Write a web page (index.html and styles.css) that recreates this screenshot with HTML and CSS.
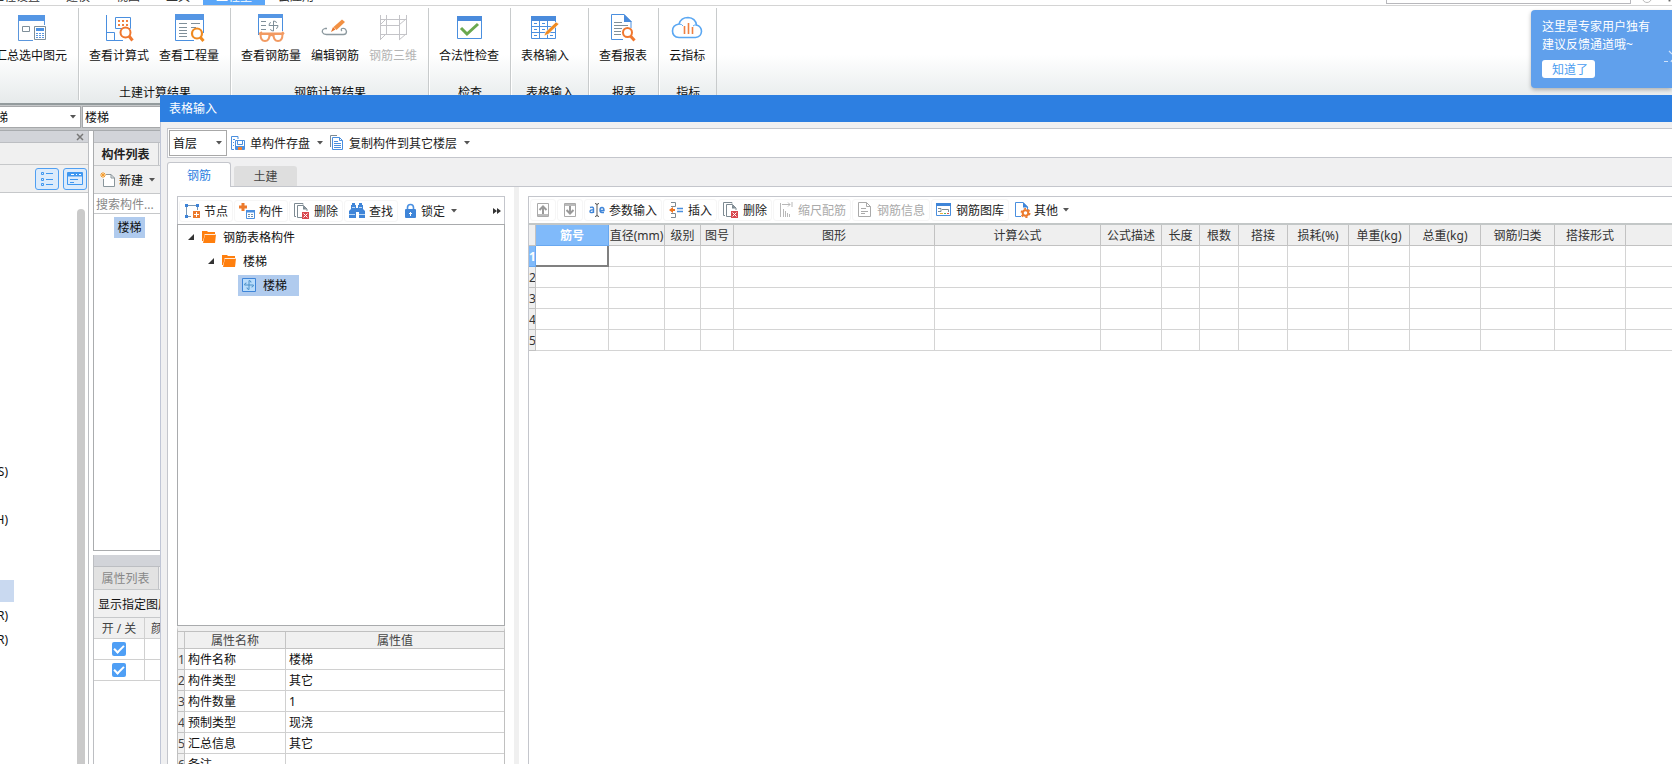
FILE: index.html
```html
<!DOCTYPE html>
<html lang="zh-CN">
<head>
<meta charset="utf-8">
<title>表格输入</title>
<link rel="stylesheet" href="styles.css">
</head>
<body>
<svg class="defs" aria-hidden="true">
  <symbol id="caret" viewBox="0 0 6 4"><path d="M0 0h6L3 3.5z" fill="#555"/></symbol>
  <symbol id="del" viewBox="0 0 16 16"><path d="M9 1.500V.5H.5v13H2" fill="none" stroke="#7d8a92"/><path d="M8 14.500H3.500V2.500H9.500l3.500 3.500V8" fill="none" stroke="#7d8a92"/><path d="M9 2.500v4h4z" fill="#7d8a92"/><path d="M8 9h7v7H8z" fill="#d9484e"/><path d="M9.500 10.500l4 4m0-4l-4 4" stroke="#fff"/></symbol>
  <symbol id="folder" viewBox="0 0 14 12"><path d="M0 0h5l1 1h7v2H3L1 10H0z" fill="#ff7f0e"/><path d="M3 3.500h11L13 12H1z" fill="#ff7f0e"/><path d="M2.500 3.500h11" stroke="#fff" stroke-width=".7"/></symbol>
  <symbol id="open" viewBox="0 0 6 6"><path d="M6 0v6H0z" fill="#333"/></symbol>
</svg>

<nav class="menu">
  <a href="#">工程设置</a><a href="#">建模</a><a href="#">视图</a><a href="#">工具</a><a href="#" class="current">工程量</a><a href="#">云应用</a>
  <input class="menu-search" type="text" placeholder="请输入功能名称或描述" aria-label="搜索功能">
  <span class="menu-dot"></span><span class="menu-dot dark"></span>
</nav>

<section class="ribbon">
  <div class="group first">
    <div class="tools">
      <button><svg viewBox="0 0 28 28"><path d="M1 1h27v6H1z" fill="#5596e4"/><path d="M1.500 7v19.500H16M27.500 7v4" fill="none" stroke="#5b96dc"/><path d="M5.500 17.500h7v-5h-7z" fill="#fff" stroke="#7f8f99"/><path d="M17.500 12.500h11v13h-11z" fill="#fff" stroke="#7f8f99"/><path d="M19 14h8v3h-8z" fill="#4a90e2"/><path d="M19 19.500h8M19 21.500h8M19 23.500h8" stroke="#5b96dc" stroke-dasharray="2 1"/></svg><span>汇总选中图元</span></button>
    </div>
    <h2></h2>
  </div>
  <div class="group">
    <div class="tools">
      <button><svg viewBox="0 0 28 28"><path d="M1.500 1v25.500H18M1.500 18.500h8v8" fill="none" stroke="#4a8fdf"/><path d="M10.500 3.500h15v11h-15z" fill="#fff" stroke="#4a8fdf"/><path d="M13 7h10M13 11h10" stroke="#f08040" stroke-width="2" stroke-dasharray="2 2"/><circle cx="20.500" cy="18.500" r="5" fill="#fff" stroke="#f07830" stroke-width="2"/><path d="M24 22l3.500 4.500" stroke="#f07830" stroke-width="3"/></svg><span>查看计算式</span></button>
      <button><svg viewBox="0 0 28 28"><path d="M0 0h29v6H0z" fill="#5596e4"/><path d="M.5 6v20.500H19M28.500 6v13" fill="none" stroke="#4a8fdf"/><path d="M4 9.500h8M16 9.500h9M4 13.500h8M16 13.500h5M4 16.500h8M4 19.500h8M4 22.500h8" stroke="#7f8f99"/><circle cx="22" cy="19.500" r="5" fill="#fff" stroke="#ef8a20" stroke-width="2.200"/><path d="M25.500 23.500l3 3.500" stroke="#ef8a20" stroke-width="3"/></svg><span>查看工程量</span></button>
    </div>
    <h2>土建计算结果</h2>
  </div>
  <div class="group">
    <div class="tools">
      <button><svg viewBox="0 0 28 28"><path d="M1 0h25v4H1z" fill="#5596e4"/><path d="M1.500 4v17M25.500 4v13" stroke="#4a8fdf"/><path d="M4 7.500h5M4 11.500h5M4 15.500h5M12 11.500h9M16.500 7v10M12 11.500q0-3 2-3M21 11.500q0 3-2 3M16.500 7q3 0 3 2M16.500 17q-3 0-3-2" fill="none" stroke="#7f8f99"/><path d="M2 20l3-2M27 20l-2-2M2 19.500h25M12.500 22q2-2 4 0" fill="none" stroke="#f29a62" stroke-width="2"/><path d="M3.500 20q0 7 4.500 7t4.500-7zM16.500 20q0 7 4.500 7t4.500-7z" fill="#fff" stroke="#f29a62" stroke-width="2"/></svg><span>查看钢筋量</span></button>
      <button><svg viewBox="0 0 28 28"><path d="M6 14.500H4q-3.500 1-2.500 4 1 2 4 2h17q3 0 3-3-1-4-4.500-3-1.500 1 0 2.500" fill="none" stroke="#8c999f" stroke-width="1.300"/><path d="M10 18l2-5 2.500 2.500z" fill="#e8762c"/><path d="M12.500 13L21 5.500l3 2.500-8.500 8z" fill="#f29042"/></svg><span>编辑钢筋</span></button>
      <button disabled><svg viewBox="0 0 28 28"><path d="M1.500 1v25M7.500 1v20M20.500 1v25M27.500 1v20M1 5.500h26M1 20.500h26M1 11.500h20M1 26l6-6M20 26l7-6M1 11l6-6M20 11l7-6" fill="none" stroke="#c4c4c8"/></svg><span>钢筋三维</span></button>
    </div>
    <h2>钢筋计算结果</h2>
  </div>
  <div class="group">
    <div class="tools">
      <button><svg viewBox="0 0 28 28"><path d="M2 2h25v5H2z" fill="#4a8bdc"/><path d="M2.500 7v17.500h24V7" fill="#fff" stroke="#4a8fdf"/><path d="M6 14l6 6L23 10" fill="none" stroke="#6aa84f" stroke-width="3"/></svg><span>合法性检查</span></button>
    </div>
    <h2>检查</h2>
  </div>
  <div class="group wide">
    <div class="tools">
      <button><svg viewBox="0 0 28 28"><path d="M0 2h25v5H0z" fill="#4a8bdc"/><path d="M.5 7v17.500h24V7M8.500 7v17M16.500 7v17M0 12.500h25M0 18.500h25" fill="none" stroke="#4a8fdf"/><path d="M3 9.500h3M11 9.500h3M3 15.500h3M11 15.500h3M3 21.500h3M19 21.500h3" stroke="#4a8fdf"/><path d="M13 22l1.500-4L25 8l3 2-10.500 10z" fill="#ef8a20" stroke="#fff" stroke-width=".6"/></svg><span>表格输入</span></button>
    </div>
    <h2>表格输入</h2>
  </div>
  <div class="group">
    <div class="tools">
      <button><svg viewBox="0 0 28 28"><path d="M14 25.500H2.500V.5H15l7 7V14" fill="none" stroke="#4a8fdf"/><path d="M15 0v8h8z" fill="#4a8bdc"/><path d="M5 8.500h8M5 11.500h14M5 14.500h8M5 17.500h7M5 20.500h7" stroke="#7f8f99"/><circle cx="18.500" cy="18.500" r="4.500" fill="#fff" stroke="#f07830" stroke-width="2"/><path d="M21.500 22l4 4.500" stroke="#f07830" stroke-width="3"/></svg><span>查看报表</span></button>
    </div>
    <h2>报表</h2>
  </div>
  <div class="group">
    <div class="tools">
      <button><svg class="cloud" viewBox="0 0 32 28"><path d="M8 23.500q-6.500-.5-6.500-6.500 0-6 6.500-7Q10 3.500 17 3.500q7.500.5 8.500 7.500 5 1.500 5 6.500-.5 5.500-6 6z" fill="none" stroke="#5aa7f2" stroke-width="1.600"/><path d="M8 10q3 0 4 2M22 12q1.500-1.500 4-1" fill="none" stroke="#5aa7f2"/><path d="M13.500 12v8M17.500 9v11M21.500 13v7" stroke="#f08040" stroke-width="1.600"/></svg><span>云指标</span></button>
    </div>
    <h2>指标</h2>
  </div>
</section>

<div class="combos">
  <div class="combo combo-a"><span>楼梯</span><svg class="caret"><use href="#caret"/></svg></div>
  <div class="combo combo-b"><span>楼梯</span></div>
</div>

<main class="workspace">
  <aside class="nav-panel">
    <div class="bar"><button class="close" aria-label="关闭"><svg viewBox="0 0 8 8"><path d="M1 1l6 6m0-6L1 7" stroke="#777" stroke-width="1.500"/></svg></button></div>
    <div class="nav-blank"></div>
    <div class="nav-tools">
      <button class="toggle" aria-label="列表"><svg viewBox="0 0 16 16"><path d="M2.500 1.500h2v2h-2zM2.500 7.500h2v2h-2zM2.500 12.500h2v2h-2z" fill="none" stroke="#3f97f0"/><path d="M7 2.500h7M7 8.500h7M7 13.500h7" stroke="#3f97f0"/></svg></button>
      <button class="toggle" aria-label="窗格"><svg viewBox="0 0 16 16"><path d="M1 1h14v4.500H1z" fill="#3f97f0"/><path d="M.5 1.500h15v12H.5z" fill="none" stroke="#3f97f0"/><path d="M4 3.500h3M9 3.500h1M12 3.500h2" stroke="#fff"/><path d="M3 8.500h8M3 11.500h4" stroke="#3f97f0"/></svg></button>
    </div>
    <ul class="nav-list">
      <li>(S)</li><li></li><li>(H)</li><li></li><li></li><li class="hit"></li><li>(R)</li><li>(R)</li>
    </ul>
    <div class="scroll"></div>
  </aside>

  <aside class="side">
    <section class="list-panel">
      <div class="bar"></div>
      <div class="side-tabs"><button class="side-tab active">构件列表</button></div>
      <button class="new"><svg viewBox="0 0 16 16"><path d="M6 2.500h5l3.500 3.500v8.500h-11V7M11 2.500V6h3.500" fill="#fff" stroke="#8a969c"/><path d="M3 0v6M0 3h6M1 1l4 4M5 1L1 5" stroke="#f59b2a"/></svg><span>新建</span><svg class="caret"><use href="#caret"/></svg></button>
      <input class="find" type="text" placeholder="搜索构件..." aria-label="搜索构件">
      <ul class="items"><li>楼梯</li></ul>
    </section>
    <section class="prop-panel">
      <div class="bar"></div>
      <div class="side-tabs"><button class="side-tab">属性列表</button></div>
      <p class="hint">显示指定图层</p>
      <table class="layers">
        <thead><tr><th>开 / 关</th><th class="color">颜色</th></tr></thead>
        <tbody>
          <tr><td><input type="checkbox" checked aria-label="图层一"></td><td></td></tr>
          <tr><td><input type="checkbox" checked aria-label="图层二"></td><td></td></tr>
        </tbody>
      </table>
    </section>
  </aside>
</main>

<div class="tip" role="status">
  <p>这里是专家用户独有<br>建议反馈通道哦~</p>
  <button>知道了</button>
  <svg viewBox="0 0 8 14"><path d="M5 1l3 3M0 11.500h4M7 12l1-2" stroke="#cfe2fa" stroke-width="1.200"/></svg>
</div>

<div class="dialog" role="dialog" aria-labelledby="dlg-title">
  <h1 id="dlg-title">表格输入</h1>
  <div class="dialog-body">
    <div class="floor-bar">
      <div class="select"><select aria-label="楼层"><option>首层</option></select><svg class="caret"><use href="#caret"/></svg></div>
      <button class="tool"><svg class="ico" viewBox="0 0 16 16"><path d="M8 4V1.500H1.500v13H4" fill="none" stroke="#4a8fdf"/><path d="M3 4.500h2M3 7.500h1M3 10.500h1" stroke="#4a8fdf"/><path d="M5.500 5.500h9v9h-9z" fill="#fff" stroke="#4a8fdf"/><path d="M7.500 6v3.500h5V6" fill="none" stroke="#4a8fdf"/><path d="M6 11h8v4H6z" fill="#4a90e2"/><path d="M8 12h4v3H8z" fill="#f08030"/></svg><span>单构件存盘</span><svg class="caret"><use href="#caret"/></svg></button>
      <button class="tool"><svg class="ico" viewBox="0 0 16 16"><path d="M8 .5H1.500V12" fill="none" stroke="#7d8a92"/><path d="M3.500 2.500h7l3 3v9h-10zM10.500 2.500v3h3" fill="#fff" stroke="#4a8fdf"/><path d="M5 6.500h4M5 8.500h7M5 10.500h7M5 12.500h7" stroke="#4a8fdf"/></svg><span>复制构件到其它楼层</span><svg class="caret"><use href="#caret"/></svg></button>
    </div>
    <div class="tabs" role="tablist">
      <button class="tab active" role="tab" aria-selected="true">钢筋</button>
      <button class="tab" role="tab" aria-selected="false">土建</button>
    </div>
    <div class="panes">
      <section class="left-pane">
        <div class="toolbar">
          <button class="tool"><svg class="ico" viewBox="0 0 16 16"><path d="M7 13.500H2.500v-11h11V7" fill="none" stroke="#7a98b4"/><path d="M1 1h3v3H1zM12 1h3v3h-3zM1 12h3v3H1z" fill="#3b82d8"/><path d="M9 8h7v7H9z" fill="#ec7a2c"/><path d="M12.500 9v5M10 11.500h5" stroke="#fff"/></svg><span>节点</span></button>
          <button class="tool"><svg class="ico" viewBox="0 0 16 16"><path d="M2.500 0h3v2.500H8v3H5.500V8h-3V5.500H0v-3h2.500z" fill="#ec7a2c"/><path d="M7.500 7.500h8v8h-8z" fill="#fff" stroke="#4a8fdf"/><path d="M7 7h9v2.500H7z" fill="#4a8fdf"/><path d="M9 11.500h5M9 13.500h5" stroke="#6f8faf" stroke-dasharray="2 1"/></svg><span>构件</span></button>
          <button class="tool"><svg class="ico"><use href="#del"/></svg><span>删除</span></button>
          <button class="tool"><svg class="ico" viewBox="0 0 16 16"><path d="M3 0h3v2h1v3h2V2h1V0h3v2h1v4l2 2v7h-6V9H7v6H0V8l2-2V2h1z" fill="#3f85d8"/><path d="M0 11.500h6M10 11.500h6M3 4.500h3M10 4.500h3" stroke="#bcd8f6"/></svg><span>查找</span></button>
          <button class="tool lock"><svg class="ico" viewBox="0 0 13 16"><path d="M3.500 7V4.500q0-3 3-3t3 3V7" fill="none" stroke="#4a90e2" stroke-width="1.600"/><rect x="1" y="6" width="11" height="9" rx="1" fill="#3f85d8"/><path d="M6.500 9v4M5 10.500h3" stroke="#fff"/></svg><span>锁定</span><svg class="caret"><use href="#caret"/></svg></button>
          <button class="more" aria-label="更多"><svg viewBox="0 0 8 6"><path d="M0 0l4 3-4 3zM4 0l4 3-4 3z" fill="#333"/></svg></button>
        </div>
        <ul class="tree">
          <li><svg class="open"><use href="#open"/></svg><svg class="folder"><use href="#folder"/></svg><span>钢筋表格构件</span></li>
          <li class="level2"><svg class="open"><use href="#open"/></svg><svg class="folder"><use href="#folder"/></svg><span>楼梯</span></li>
          <li class="level3"><span class="picked"><svg viewBox="0 0 14 14"><path d="M.5.5h13v13H.5z" fill="#b9dcfb" stroke="#3f85d8"/><path d="M2.500 7h9M7 2.500v9M2.500 7q0-2 2-2M11.500 7q0 2-2 2M7 2.500q2 0 2 2M7 11.500q-2 0-2-2" fill="none" stroke="#4a90c8"/></svg><span>楼梯</span></span></li>
        </ul>
        <div class="props">
          <table>
            <colgroup><col class="c-num"><col class="c-name"><col></colgroup>
            <thead><tr><th></th><th>属性名称</th><th>属性值</th></tr></thead>
            <tbody>
              <tr><th>1</th><td>构件名称</td><td>楼梯</td></tr>
              <tr><th>2</th><td>构件类型</td><td>其它</td></tr>
              <tr><th>3</th><td>构件数量</td><td>1</td></tr>
              <tr><th>4</th><td>预制类型</td><td>现浇</td></tr>
              <tr><th>5</th><td>汇总信息</td><td>其它</td></tr>
              <tr><th>6</th><td>备注</td><td></td></tr>
            </tbody>
          </table>
        </div>
      </section>
      <div class="splitter"></div>
      <section class="right-pane">
        <div class="toolbar">
          <button class="tool" disabled aria-label="上移"><svg class="ico" viewBox="0 0 16 16"><path d="M2.500 1.500h11v13h-11z" fill="#fff" stroke="#aaa"/><path d="M3 12h10v2H3z" fill="#bbb"/><path d="M8 12V5M4.500 8L8 4.500 11.500 8" fill="none" stroke="#999" stroke-width="2"/></svg></button>
          <button class="tool" disabled aria-label="下移"><svg class="ico" viewBox="0 0 16 16"><path d="M2.500 1.500h11v13h-11z" fill="#fff" stroke="#aaa"/><path d="M3 2h10v2H3z" fill="#bbb"/><path d="M8 4v7M4.500 8L8 11.500 11.500 8" fill="none" stroke="#999" stroke-width="2"/></svg></button>
          <button class="tool"><svg class="ico" viewBox="0 0 16 16"><path d="M1 5.500q3.500-1 3.500 1V11M4.500 8Q1 7.500 1 9.500t3.500.5M11 8.500h4q0-3-2-3t-2 2.500 2 2.500h2" fill="none" stroke="#3f85d8" stroke-width="1.400"/><path d="M6 1.500q2 0 2 1.500v10q0 1.500-2 1.500M10 1.500Q8 1.500 8 3M8 13q0 1.500 2 1.500" fill="none" stroke="#555"/></svg><span>参数输入</span></button>
          <button class="tool"><svg class="ico" viewBox="0 0 16 16"><path d="M3 .5h4.500v4H3M3 15.500h4.500v-4H3" fill="none" stroke="#7d8a92"/><path d="M1 8l4-3v2h2v2H5v2z" fill="#ee7420"/><path d="M9 6.500h6M9 9.500h6" stroke="#4a8fdf" stroke-width="1.400"/></svg><span>插入</span></button>
          <button class="tool"><svg class="ico"><use href="#del"/></svg><span>删除</span></button>
          <button class="tool" disabled><svg class="ico" viewBox="0 0 16 16"><path d="M2.500 1v14M4 2.500h8M10 .5l2 2-2 2M14 0v5" fill="none" stroke="#b8b8b8"/><path d="M5.500 7v8M7.500 9v6M9.500 11v4M11.500 12v3" stroke="#b8b8b8"/></svg><span>缩尺配筋</span></button>
          <button class="tool" disabled><svg class="ico" viewBox="0 0 16 16"><path d="M1.500.5h8l4 4v10h-12zM9.500.5v4h4" fill="#fff" stroke="#aaa"/><path d="M4 6.500h5M4 9.500h7M4 11.500h4" stroke="#aaa"/></svg><span>钢筋信息</span></button>
          <button class="tool"><svg class="ico" viewBox="0 0 16 16"><path d="M.5 1.500h14v12H.5z" fill="#fff" stroke="#4a8fdf"/><path d="M0 1h15v3H0z" fill="#3f85d8"/><path d="M2 6.500h3v3H2M6 7.500h6.500V10" fill="none" stroke="#7d8a92"/><path d="M4 11.500h3" stroke="#f2b13c"/><path d="M8 11.500h2" stroke="#5db665"/><path d="M11 11.500h2" stroke="#e5574f"/></svg><span>钢筋图库</span></button>
          <button class="tool other"><svg class="ico" viewBox="0 0 16 16"><path d="M6 14.500H.5V.5H8L12.500 5v3" fill="#fff" stroke="#4a8fdf"/><path d="M8 0v5.500h5.500z" fill="#3f85d8"/><circle cx="10.500" cy="11" r="4.200" fill="none" stroke="#ec7a2c" stroke-width="1.600" stroke-dasharray="2.200 2.200"/><circle cx="10.500" cy="11" r="2.800" fill="#fff" stroke="#ec7a2c" stroke-width="2"/></svg><span>其他</span><svg class="caret"><use href="#caret"/></svg></button>
        </div>
        <div class="sheet">
          <table>
            <colgroup><col class="w0"><col class="w73"><col class="w56"><col class="w36"><col class="w33"><col class="w201"><col class="w166"><col class="w61"><col class="w38"><col class="w39"><col class="w49"><col class="w61"><col class="w61"><col class="w71"><col class="w74"><col class="w71"><col></colgroup>
            <thead><tr><th></th><th class="on">筋号</th><th>直径(mm)</th><th>级别</th><th>图号</th><th>图形</th><th>计算公式</th><th>公式描述</th><th>长度</th><th>根数</th><th>搭接</th><th>损耗(%)</th><th>单重(kg)</th><th>总重(kg)</th><th>钢筋归类</th><th>搭接形式</th><th></th></tr></thead>
            <tbody>
              <tr><th class="on">1</th><td class="cursor"></td><td></td><td></td><td></td><td></td><td></td><td></td><td></td><td></td><td></td><td></td><td></td><td></td><td></td><td></td><td></td></tr>
              <tr><th>2</th><td></td><td></td><td></td><td></td><td></td><td></td><td></td><td></td><td></td><td></td><td></td><td></td><td></td><td></td><td></td><td></td></tr>
              <tr><th>3</th><td></td><td></td><td></td><td></td><td></td><td></td><td></td><td></td><td></td><td></td><td></td><td></td><td></td><td></td><td></td><td></td></tr>
              <tr><th>4</th><td></td><td></td><td></td><td></td><td></td><td></td><td></td><td></td><td></td><td></td><td></td><td></td><td></td><td></td><td></td><td></td></tr>
              <tr><th>5</th><td></td><td></td><td></td><td></td><td></td><td></td><td></td><td></td><td></td><td></td><td></td><td></td><td></td><td></td><td></td><td></td></tr>
            </tbody>
          </table>
        </div>
      </section>
    </div>
  </div>
</div>
</body>
</html>
```
FILE: styles.css
```css
* { box-sizing: border-box; }
html, body { height: 100%; }
body {
  margin: 0;
  display: flex;
  flex-direction: column;
  position: relative;
  overflow: hidden;
  background: #fff;
  color: #111;
  font: 12px/18px "Noto Sans", "Noto Sans CJK SC", sans-serif;
}
button, input, select { font: inherit; color: inherit; margin: 0; }
button { border: 0; background: none; padding: 0; white-space: nowrap; }
ul { list-style: none; margin: 0; padding: 0; }
h1, h2, p { margin: 0; font-size: 12px; font-weight: 400; }
svg { display: block; flex: none; overflow: visible; }
table { border-collapse: separate; border-spacing: 0; table-layout: fixed; width: 100%; }
th, td { padding: 0; font-weight: 400; white-space: nowrap; overflow: hidden; }
.defs { position: absolute; width: 0; height: 0; }
.caret { width: 6px; height: 4px; }

/* main menu */
.menu {
  flex: none;
  height: 6px;
  display: flex;
  align-items: flex-end;
  overflow: hidden;
  padding-right: 1px;
  border-bottom: 1px solid #d4d4d4;
}
.menu a { flex: none; padding: 0 13px; height: 17px; color: #333; text-decoration: none; }
.menu a:first-child { margin-left: -21px; }
.menu .current { background: #5aa6f8; color: #fff; }
.menu-search {
  margin: 0 11px 1px auto;
  width: 245px;
  height: 18px;
  padding: 0 3px;
  border: 1px solid #b8b8bc;
}
.menu-search::placeholder { color: #999; opacity: 1; }
.menu-dot { width: 10px; height: 10px; margin: 0 16px 2px 0; border: 1px solid #bbb; border-radius: 5px; }
.menu-dot.dark { width: 3px; height: 4px; margin: 0 0 3px; background: #666; }

/* ribbon */
.ribbon {
  flex: none;
  display: flex;
  padding: 2px 0 3px;
  height: 99px;
  overflow: hidden;
  border-bottom: 2px solid #939b9d;
  background: linear-gradient(#fff 50%, #e6eaeb);
}
.group {
  flex: none;
  padding: 6px 11px 0 9px;
  border-left: 1px solid #fff;
  border-right: 1px solid #c8cbcc;
}
.group.first { margin-left: -15px; }
.group.wide { width: 78px; }
.tools { display: flex; gap: 10px; }
.tools button { display: flex; flex-direction: column; align-items: center; gap: 5px; }
.tools svg { width: 28px; height: 28px; }
.tools .cloud { width: 32px; margin: 0 -2px; }
.tools button:disabled { color: #b4b4b4; }
.group h2 { margin-top: 19px; padding-left: 2px; text-align: center; white-space: nowrap; }

/* component pickers */
.combos {
  flex: none;
  display: flex;
  gap: 1px;
  height: 26px;
  padding: 1px 0 2px;
  background: #c6c8ca;
  border-bottom: 1px solid #a8abae;
}
.combo {
  display: flex;
  align-items: center;
  justify-content: space-between;
  background: #fff;
  border: 1px solid #a6a8aa;
}
.combo span { padding-top: 2px; }
.combo-a { width: 82px; margin-left: -1px; padding-right: 4px; }
.combo-a span { margin-left: -16px; }
.combo-b { flex: 1; padding-left: 2px; }

/* workspace */
.workspace { flex: 1; min-height: 0; display: flex; gap: 4px; }
.bar { flex: none; height: 12px; background: #d2d4d9; border-bottom: 1px solid #bcbec2; }
.nav-panel {
  position: relative;
  flex: none;
  width: 89px;
  display: flex;
  flex-direction: column;
  border-right: 1px solid #bcbec2;
}
.close { display: block; margin: 0 4px 0 auto; padding-top: 2px; width: 8px; }
.close svg { width: 8px; height: 8px; }
.nav-blank { flex: none; height: 22px; background: #f0f0f0; border-bottom: 1px solid #c6c8ca; }
.nav-tools {
  flex: none;
  height: 28px;
  display: flex;
  gap: 4px;
  align-items: center;
  justify-content: flex-end;
  padding-right: 1px;
  background: #f0f0f0;
  border-bottom: 1px solid #c6c8ca;
}
.toggle {
  width: 24px;
  height: 22px;
  display: grid;
  place-items: center;
  background: #dcebfb;
  border: 1px solid #4f9ff2;
  border-radius: 3px;
}
.toggle svg { width: 16px; height: 16px; }
.nav-list { padding-top: 267px; }
.nav-list li {
  width: 14px;
  height: 22px;
  margin-bottom: 2px;
  padding: 2px 6px 0 0;
  display: flex;
  justify-content: flex-end;
  align-items: center;
  overflow: hidden;
}
.nav-list .hit { background: #c9d9f0; }
.scroll {
  position: absolute;
  top: 78px;
  right: 3px;
  bottom: 0;
  width: 8px;
  background: #cacaca;
  border-radius: 4px 4px 0 0;
}
.side { flex: 1; min-width: 0; display: flex; flex-direction: column; gap: 4px; }
.list-panel { flex: 1; display: flex; flex-direction: column; border: solid #aaacae; border-width: 0 0 1px 1px; }
.prop-panel { flex: none; height: 209px; border-left: 1px solid #bcbec2; }
.side-tabs { flex: none; height: 23px; background: #f0f0f0; border-bottom: 1px solid #c6c8ca; }
.side-tab { width: 65px; height: 22px; padding: 2px 1px 0 0; background: #e2e2e2; color: #888; border-right: 1px solid #c0c2c6; }
.side-tab.active { background: #f0f0f0; color: #222; font-weight: 700; }
.new {
  height: 28px;
  display: flex;
  align-items: center;
  padding-left: 6px;
  background: #f0f0f0;
  border-bottom: 1px solid #c6c8ca;
}
.new svg { width: 16px; height: 16px; }
.new span { margin: 0 6px 0 3px; padding-top: 2px; }
.new .caret { width: 6px; height: 4px; }
.find { height: 20px; padding: 2px 2px 0; border: 0; border-bottom: 1px solid #c6c8ca; outline: 0; }
.find::placeholder { color: #888; opacity: 1; }
.items { padding: 3px 0 0 20px; }
.items li { width: 31px; height: 21px; line-height: 22px; text-align: center; background: #b0cbee; }
.hint { height: 28px; padding: 6px 4px 0; background: #f0f0f0; border-bottom: 1px solid #c6c8ca; }
.layers th, .layers td { height: 21px; border-right: 1px solid #d0d0d0; border-bottom: 1px solid #d0d0d0; text-align: center; }
.layers th { padding-top: 2px; background: #f0f0f0; color: #444; }
.layers th:first-child { width: 51px; }
.layers .color { text-align: left; padding-left: 6px; }
.layers input {
  appearance: none;
  display: grid;
  place-items: center;
  width: 14px;
  height: 14px;
  margin: 0 auto;
  border-radius: 2px;
  background: #4f9ff5;
}
.layers input::before {
  content: "";
  width: 8px;
  height: 4px;
  margin-bottom: 2px;
  border: solid #fff;
  border-width: 0 0 2px 2px;
  transform: rotate(-45deg);
}

/* floating tip */
.tip {
  position: absolute;
  top: 10px;
  right: 0;
  width: 141px;
  height: 78px;
  padding: 8px 0 0 11px;
  color: #fff;
  background: #60a0ec;
  border-radius: 4px 0 0 4px;
  box-shadow: 0 2px 4px #0004;
}
.tip button {
  width: 53px;
  height: 18px;
  margin-top: 6px;
  padding: 1px 0 0 3px;
  line-height: 17px;
  color: #4a9cf0;
  background: #fff;
  border-radius: 3px;
}
.tip svg { position: absolute; right: 0; top: 40px; width: 8px; height: 14px; overflow: hidden; }

/* dialog window */
.dialog {
  position: absolute;
  inset: 95px 0 0 160px;
  display: flex;
  flex-direction: column;
  background: #f0f0f1;
}
.dialog h1 { flex: none; height: 27px; padding: 0 9px; line-height: 28px; color: #fff; background: #2d7fe1; }
.dialog-body {
  flex: 1;
  min-height: 0;
  display: flex;
  flex-direction: column;
  padding: 6px 0 0 6px;
  border-left: 1px solid #c0c6d6;
}
.floor-bar {
  flex: none;
  height: 30px;
  display: flex;
  align-items: center;
  padding-left: 1px;
  background: #fff;
  border: solid #c4c6cc;
  border-width: 1px 0 1px 1px;
}
.select { display: grid; align-items: center; width: 58px; height: 26px; }
.select select {
  grid-area: 1 / 1;
  height: 26px;
  padding: 2px 3px 0;
  appearance: none;
  background: #fff;
  border: 1px solid #a8a8a8;
  border-radius: 0;
}
.select .caret { grid-area: 1 / 1; justify-self: end; margin-right: 5px; }
.tool {
  height: 22px;
  display: flex;
  align-items: center;
  gap: 4px;
  padding: 0 4px;
  color: #222;
  border: 1px solid #f6f6f6;
  border-radius: 3px;
}
.tool span { padding-top: 2px; }
.tool .ico { width: 16px; height: 16px; }
.tool .caret { margin: 0 3px 0 2px; }
.tool:disabled { color: #aaa; }
.floor-bar .tool { padding: 0 3px; border: 0; }
.floor-bar .tool .caret { margin: 0 0 0 3px; }
.tabs { flex: none; display: flex; align-items: flex-end; gap: 3px; height: 29px; border-bottom: 1px solid #c4c6cc; }
.tab { width: 63px; height: 20px; padding-top: 2px; color: #444; background: #dedede; border-radius: 3px 3px 0 0; }
.tab.active {
  width: 64px;
  height: 25px;
  margin-bottom: -1px;
  color: #2d7fe1;
  background: #fff;
  border: 1px solid #c4c6cc;
  border-bottom: 0;
}
.panes { flex: 1; min-height: 0; display: flex; background: #fff; border-left: 1px solid #c4c6cc; }
.left-pane { flex: none; width: 346px; display: flex; flex-direction: column; padding: 9px 9px 0; }
.splitter { flex: none; width: 5px; background: #f0f0f0; }
.right-pane { flex: 1; min-width: 0; display: flex; flex-direction: column; padding: 9px 0 0 9px; }
.toolbar {
  flex: none;
  display: flex;
  align-items: center;
  gap: 1px;
  height: 28px;
  padding-left: 1px;
  border: 1px solid #c4c6cc;
  border-bottom: 0;
}
.right-pane .toolbar { height: 27px; border-right: 0; }
.tool.lock { border-color: transparent; }
.tool.lock .ico { width: 13px; }
.tool.other { border-color: transparent; gap: 3px; }
.more { margin: 0 3px 0 auto; }
.more svg { width: 8px; height: 6px; }
.tree { flex: 1; min-height: 0; border: 1px solid #a9abad; }
.tree li { display: flex; align-items: center; height: 24px; padding-left: 10px; }
.tree span { padding-top: 2px; }
.tree .level2 { padding-left: 30px; }
.tree .level3 { padding-left: 60px; }
.open { width: 6px; height: 6px; margin-right: 8px; }
.folder { width: 14px; height: 12px; margin-right: 7px; }
.tree .picked { display: flex; align-items: center; gap: 7px; width: 61px; height: 21px; padding: 0 0 0 4px; background: #b0cbee; }
.picked svg { width: 14px; height: 14px; }
.props {
  flex: none;
  height: 138px;
  overflow: hidden;
  border-left: 1px solid #c0c0c0;
  border-right: 1px solid #c0c0c0;
  border-top: 5px solid #f0f0f0;
}
.props table { border-top: 1px solid #c0c0c0; }
.props tr { height: 21px; }
.props thead tr { height: 17px; }
.props th, .props td { padding-top: 2px; border-right: 1px solid #d0d0d0; border-bottom: 1px solid #d0d0d0; line-height: 14px; }
.props th { background: #f0f0f0; color: #444; border-color: #c4c4c4; }
.props td { padding-left: 3px; }
.props tr > :last-child { border-right: 0; }
.c-num { width: 7px; }
.c-name { width: 101px; }
.sheet { flex: 1; min-height: 0; border-left: 1px solid #c4c6cc; border-top: 2px solid #c3c7c7; }
.sheet tr { height: 21px; }
.sheet th, .sheet td { height: 21px; border-right: 1px solid #d4d4d4; border-bottom: 1px solid #d4d4d4; }
.sheet th { padding-top: 2px; background: #efefef; color: #333; border-color: #c2c2c2; line-height: 18px; }
.sheet tr > :last-child { border-right: 0; }
.sheet .on { background: #80bafa; color: #fff; border-color: #68a8f0; font-weight: 700; }
.sheet .cursor { border-right: 2px solid #808080; border-bottom: 2px solid #808080; }
.w0 { width: 7px; }
.w33 { width: 33px; }
.w36 { width: 36px; }
.w38 { width: 38px; }
.w39 { width: 39px; }
.w49 { width: 49px; }
.w56 { width: 56px; }
.w61 { width: 61px; }
.w71 { width: 71px; }
.w73 { width: 73px; }
.w74 { width: 74px; }
.w166 { width: 166px; }
.w201 { width: 201px; }
```
